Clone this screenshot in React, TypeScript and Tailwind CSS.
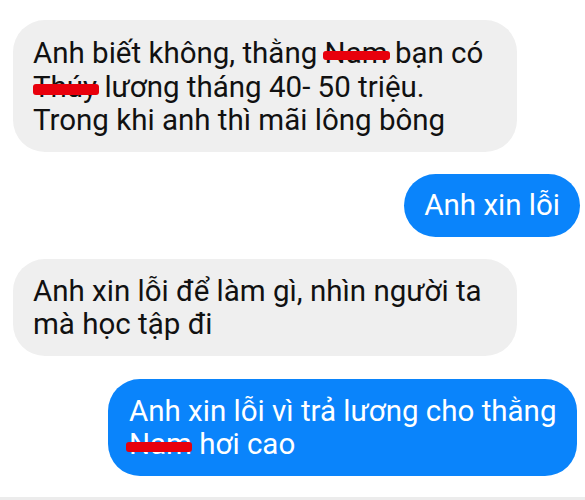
import React from 'react';

// Red marker stroke laid over a censored name
const Scribble: React.FC<{ text: string; bar: string }> = ({ text, bar }) => (
  <span className="relative inline-block">
    {text}
    <span className={`absolute bg-[#e8000c] rounded-[3px] ${bar}`} />
  </span>
);

interface BubbleProps {
  mine?: boolean;
  className?: string;
  children: React.ReactNode;
}

const Bubble: React.FC<BubbleProps> = ({ mine, className, children }) => (
  <div
    className={
      mine
        ? `bg-[#0a84fb] text-white rounded-[32px] leading-[33.5px] ${className}`
        : `bg-[#efefef] text-[#111111] rounded-[32px] leading-[33.5px] ${className}`
    }
  >
    {children}
  </div>
);

export default function App() {
  return (
    <div
      className="w-[585px] h-[500px] bg-white flex flex-col text-[29.5px]"
      style={{ fontFamily: 'Roboto, "Noto Sans", sans-serif' }}
    >
      <div className="flex flex-col gap-[22px] pt-[20px]">
        <Bubble className="ml-[13px] w-[504px] pl-[20px] pt-[17px] pb-[14px]">
          <div>
            Anh biết không, thằng{' '}
            <Scribble text="Nam" bar="left-[-2px] right-[-2px] top-[14px] h-[9px]" /> bạn có
          </div>
          <div>
            <Scribble text="Thúy" bar="left-0 right-[-2px] top-[13px] h-[11px]" /> lương tháng 40- 50 triệu.
          </div>
          <div>Trong khi anh thì mãi lông bông</div>
        </Bubble>

        <div className="flex justify-end pr-[5px]">
          <Bubble mine className="px-[20px] h-[63px] pt-[15px]">
            Anh xin lỗi
          </Bubble>
        </div>

        <Bubble className="ml-[13px] w-[504px] pl-[20px] pt-[16px] pb-[14px]">
          <div>Anh xin lỗi để làm gì, nhìn người ta</div>
          <div>mà học tập đi</div>
        </Bubble>

        <div className="flex justify-end pr-[8px] pt-[1px]">
          <Bubble mine className="w-[469px] pl-[21px] pt-[16px] pb-[14px]">
            <div>Anh xin lỗi vì trả lương cho thằng</div>
            <div>
              <Scribble text="Nam" bar="left-[-3px] right-0 top-[14px] h-[10px]" /> hơi cao
            </div>
          </Bubble>
        </div>
      </div>
      <div className="flex-1" />
      <div className="h-[3px] bg-[#ececec]" />
    </div>
  );
}
